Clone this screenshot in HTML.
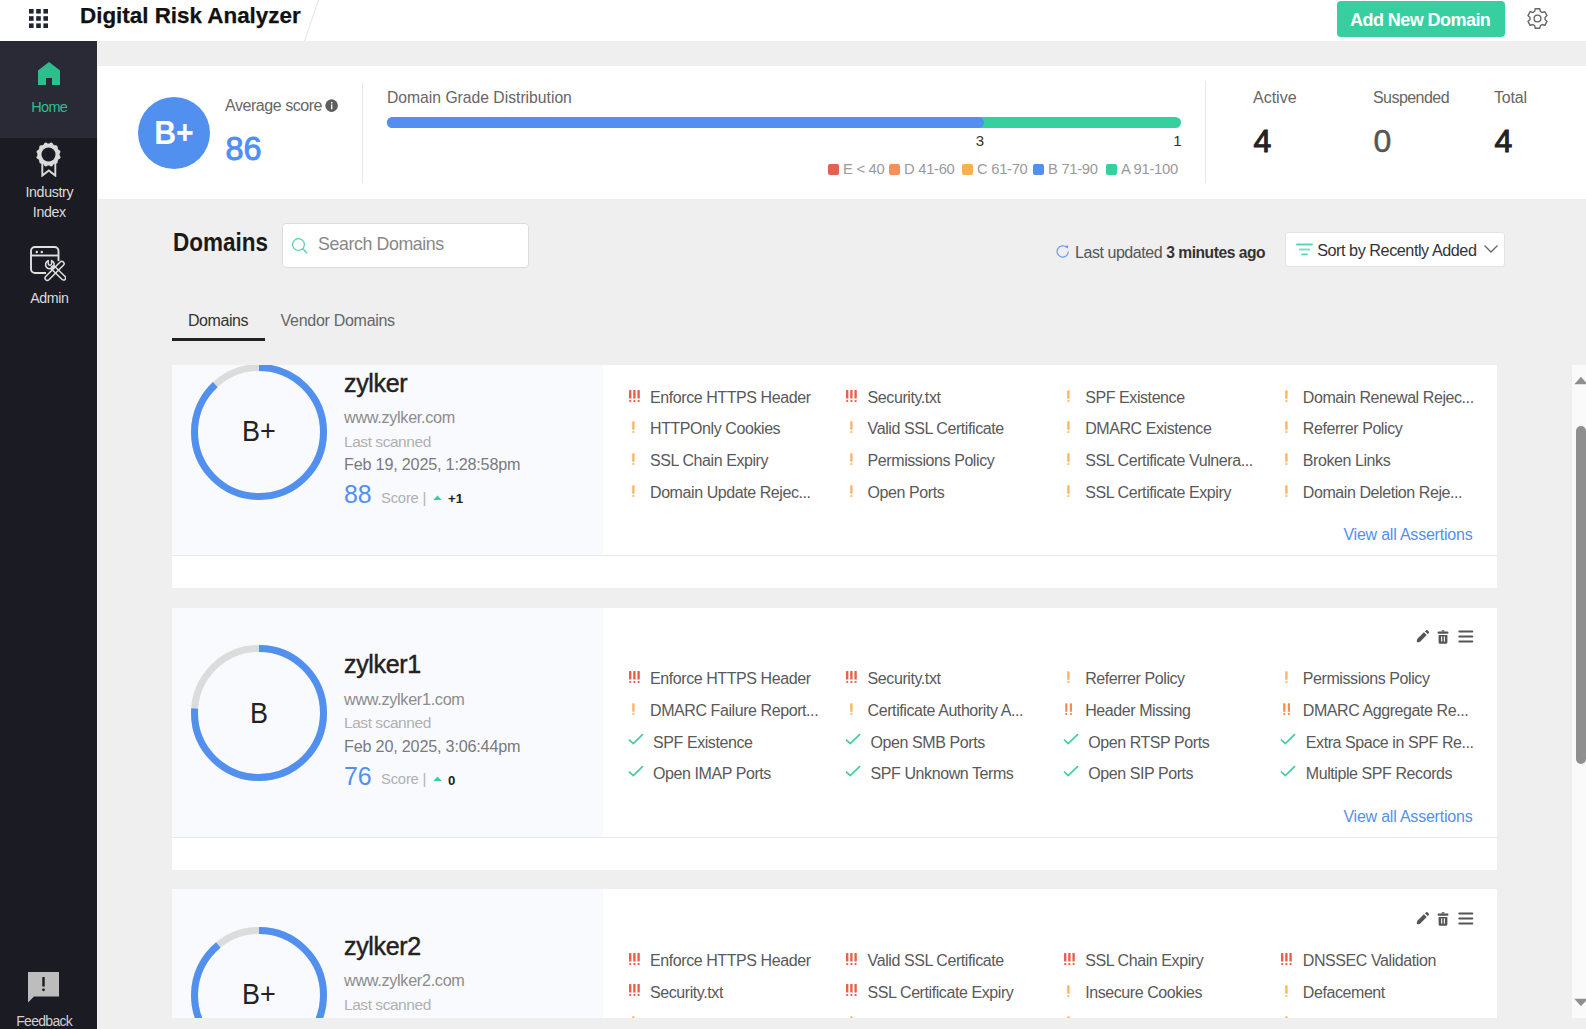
<!DOCTYPE html>
<html><head><meta charset="utf-8"><title>Digital Risk Analyzer</title>
<style>
html,body{margin:0;padding:0;width:1586px;height:1029px;overflow:hidden;background:#efefef}
body{position:relative;font-family:"Liberation Sans",sans-serif}
.t{position:absolute;line-height:1;white-space:nowrap}
svg{display:block}
</style></head><body>
<div style="position:absolute;left:0px;top:0px;width:1586px;height:41px;background:#fff"></div>
<svg style="position:absolute;left:29px;top:9px" width="19" height="19" viewBox="0 0 19 19"><rect x="0.0" y="0.0" width="4.6" height="4.6" fill="#1f2532"/><rect x="7.2" y="0.0" width="4.6" height="4.6" fill="#1f2532"/><rect x="14.4" y="0.0" width="4.6" height="4.6" fill="#1f2532"/><rect x="0.0" y="7.2" width="4.6" height="4.6" fill="#1f2532"/><rect x="7.2" y="7.2" width="4.6" height="4.6" fill="#1f2532"/><rect x="14.4" y="7.2" width="4.6" height="4.6" fill="#1f2532"/><rect x="0.0" y="14.4" width="4.6" height="4.6" fill="#1f2532"/><rect x="7.2" y="14.4" width="4.6" height="4.6" fill="#1f2532"/><rect x="14.4" y="14.4" width="4.6" height="4.6" fill="#1f2532"/></svg>
<div class="t" style="left:80px;top:4.84px;font-size:22.4px;color:#111;font-weight:700;-webkit-text-stroke:0.25px #111">Digital Risk Analyzer</div>
<svg style="position:absolute;left:300px;top:0px" width="24" height="41" viewBox="0 0 24 41"><line x1="18.6" y1="0" x2="4.5" y2="41" stroke="#e4e4e4" stroke-width="1"/></svg>
<div style="position:absolute;left:1337px;top:1px;width:168px;height:36px;background:#37cfa0;border-radius:4px"></div>
<div class="t" style="left:1350px;top:10.96px;font-size:18px;color:#fff;font-weight:700;letter-spacing:-0.55px">Add New Domain</div>
<svg style="position:absolute;left:1526.3px;top:7.2px" width="23" height="23" viewBox="0 0 23 23"><polygon points="8.65,4.45 9.25,1.76 13.75,1.76 14.35,4.45 16.18,5.51 18.81,4.68 21.06,8.58 19.03,10.44 19.03,12.56 21.06,14.42 18.81,18.32 16.18,17.49 14.35,18.55 13.75,21.24 9.25,21.24 8.65,18.55 6.82,17.49 4.19,18.32 1.94,14.42 3.97,12.56 3.97,10.44 1.94,8.58 4.19,4.68 6.82,5.51" fill="none" stroke="#646464" stroke-width="1.35" stroke-linejoin="round"/><circle cx="11.5" cy="11.5" r="3.4" fill="none" stroke="#646464" stroke-width="1.35"/></svg>
<div style="position:absolute;left:0px;top:41px;width:97px;height:988px;background:#1b1b23"></div>
<div style="position:absolute;left:97px;top:41px;width:1px;height:988px;background:#f4f4f4"></div>
<div style="position:absolute;left:0px;top:41px;width:97px;height:97px;background:#2a2a36"></div>
<svg style="position:absolute;left:37px;top:61px" width="24" height="25" viewBox="0 0 24 25"><path d="M1 9.5 L12 1 L23 9.5 V24 H15 V17 H9 V24 H1 Z" fill="#2dbe8d"/></svg>
<div class="t" style="left:49.3px;transform:translateX(-50%) scaleX(1);top:99.63px;font-size:14.5px;color:#2dbe8d;font-weight:400;letter-spacing:-0.7px">Home</div>
<svg style="position:absolute;left:36px;top:142px" width="25" height="35" viewBox="0 0 25 35"><path d="M6.3 19 V33.6 L12.8 28.4 L19.3 33.6 V19" fill="none" stroke="#dadada" stroke-width="1.9" stroke-linejoin="miter"/><circle cx="12.5" cy="12.5" r="11.1" fill="#dadada"/><circle cx="22.55" cy="15.17" r="1.9" fill="#dadada"/><circle cx="19.87" cy="19.84" r="1.9" fill="#dadada"/><circle cx="15.21" cy="22.54" r="1.9" fill="#dadada"/><circle cx="9.83" cy="22.55" r="1.9" fill="#dadada"/><circle cx="5.16" cy="19.87" r="1.9" fill="#dadada"/><circle cx="2.46" cy="15.21" r="1.9" fill="#dadada"/><circle cx="2.45" cy="9.83" r="1.9" fill="#dadada"/><circle cx="5.13" cy="5.16" r="1.9" fill="#dadada"/><circle cx="9.79" cy="2.46" r="1.9" fill="#dadada"/><circle cx="15.17" cy="2.45" r="1.9" fill="#dadada"/><circle cx="19.84" cy="5.13" r="1.9" fill="#dadada"/><circle cx="22.54" cy="9.79" r="1.9" fill="#dadada"/><circle cx="12.5" cy="12.5" r="7.0" fill="#1b1b23"/></svg>
<div class="t" style="left:49.3px;transform:translateX(-50%) scaleX(1);top:185.48px;font-size:14.2px;color:#dcdcdc;font-weight:400;letter-spacing:-0.35px">Industry</div>
<div class="t" style="left:49.3px;transform:translateX(-50%) scaleX(1);top:205.48px;font-size:14.2px;color:#dcdcdc;font-weight:400;letter-spacing:-0.35px">Index</div>
<svg style="position:absolute;left:30px;top:246px" width="36" height="36" viewBox="0 0 36 36"><path d="M16 27 H5 a4 4 0 0 1 -4 -4 V5 a4 4 0 0 1 4 -4 H24.5 a4 4 0 0 1 4 4 V15" fill="none" stroke="#e0e0e0" stroke-width="1.9"/><line x1="1" y1="9.5" x2="28.5" y2="9.5" stroke="#e0e0e0" stroke-width="1.9"/><circle cx="6.8" cy="6" r="1.2" fill="#e0e0e0"/><circle cx="11.8" cy="6" r="1.2" fill="#e0e0e0"/><g fill="none" stroke="#e0e0e0" stroke-width="1.5" stroke-linejoin="round"><path d="M18.93 33.82 L33.43 19.22 A2.3 2.3 0 0 0 30.17 15.98 L15.67 30.58 A2.3 2.3 0 0 0 18.93 33.82 Z"/><path d="M21.84 23.51 L32.14 33.51 A2.1 2.1 0 0 0 35.06 30.49 L24.76 20.49 A2.1 2.1 0 0 0 21.84 23.51 Z"/><path d="M18.2 14.6 A4.3 4.3 0 1 0 21.6 14.6 V17.6 A1.6 1.6 0 0 1 18.2 17.6 Z"/></g></svg>
<div class="t" style="left:49.3px;transform:translateX(-50%) scaleX(1);top:291.38px;font-size:14.2px;color:#dcdcdc;font-weight:400;letter-spacing:-0.4px">Admin</div>
<svg style="position:absolute;left:28px;top:972px" width="31" height="31" viewBox="0 0 31 31"><path d="M0 0 H31 V24.5 H6 L0 30.5 Z" fill="#bdbdbd"/><rect x="14.3" y="5" width="2.4" height="9.5" fill="#1b1b23"/><circle cx="15.5" cy="17.8" r="1.4" fill="#1b1b23"/></svg>
<div class="t" style="left:44.2px;transform:translateX(-50%) scaleX(1);top:1014.25px;font-size:14px;color:#d0d0d0;font-weight:400;letter-spacing:-0.7px">Feedback</div>
<div style="position:absolute;left:98px;top:41px;width:1488px;height:988px;background:#efefef"></div>
<div style="position:absolute;left:98px;top:66px;width:1488px;height:133px;background:#fff"></div>
<div style="position:absolute;left:137.5px;top:96.5px;width:72px;height:72px;background:#5290f0;border-radius:50%"></div>
<div class="t" style="left:174px;transform:translateX(-50%) scaleX(0.93);top:117.09px;font-size:32.5px;color:#fff;font-weight:700;">B+</div>
<div class="t" style="left:225px;top:97.76px;font-size:16px;color:#666;font-weight:400;letter-spacing:-0.45px">Average score</div>
<svg style="position:absolute;left:325.2px;top:98.8px" width="13.5" height="13.5" viewBox="0 0 13.5 13.5"><circle cx="6.6" cy="6.6" r="6.3" fill="#5e5e5e"/><rect x="6.0" y="5.4" width="1.4" height="4.8" fill="#fff"/><rect x="6.0" y="3.0" width="1.4" height="1.5" fill="#fff"/></svg>
<div class="t" style="left:225.5px;top:132.77px;font-size:32.4px;color:#4f8ef7;font-weight:400;-webkit-text-stroke:0.9px #4f8ef7">86</div>
<div style="position:absolute;left:362px;top:81.5px;width:1px;height:101.5px;background:#e6e6e6"></div>
<div class="t" style="left:387px;top:89.51px;font-size:15.7px;color:#666;font-weight:400;">Domain Grade Distribution</div>
<div style="position:absolute;left:387px;top:116.5px;width:794px;height:11px;background:#36cf9e;border-radius:6px"></div>
<div style="position:absolute;left:387px;top:116.5px;width:597px;height:11px;background:#528ff0;border-radius:6px"></div>
<div class="t" style="left:980px;transform:translateX(-50%) scaleX(1);top:133.10px;font-size:15px;color:#333;font-weight:400;">3</div>
<div class="t" style="left:1177.5px;transform:translateX(-50%) scaleX(1);top:133.10px;font-size:15px;color:#333;font-weight:400;">1</div>
<div style="position:absolute;left:828px;top:163.5px;width:11px;height:11px;background:#e5604f;border-radius:2px"></div>
<div class="t" style="left:843px;top:161.97px;font-size:14.8px;color:#9a9a9a;font-weight:400;letter-spacing:-0.3px">E &lt; 40</div>
<div style="position:absolute;left:889px;top:163.5px;width:11px;height:11px;background:#f59158;border-radius:2px"></div>
<div class="t" style="left:904px;top:161.97px;font-size:14.8px;color:#9a9a9a;font-weight:400;letter-spacing:-0.3px">D 41-60</div>
<div style="position:absolute;left:962px;top:163.5px;width:11px;height:11px;background:#fbb04f;border-radius:2px"></div>
<div class="t" style="left:977px;top:161.97px;font-size:14.8px;color:#9a9a9a;font-weight:400;letter-spacing:-0.3px">C 61-70</div>
<div style="position:absolute;left:1033px;top:163.5px;width:11px;height:11px;background:#528ff0;border-radius:2px"></div>
<div class="t" style="left:1048px;top:161.97px;font-size:14.8px;color:#9a9a9a;font-weight:400;letter-spacing:-0.3px">B 71-90</div>
<div style="position:absolute;left:1106px;top:163.5px;width:11px;height:11px;background:#36cf9e;border-radius:2px"></div>
<div class="t" style="left:1121px;top:161.97px;font-size:14.8px;color:#9a9a9a;font-weight:400;letter-spacing:-0.3px">A 91-100</div>
<div style="position:absolute;left:1205px;top:81px;width:1px;height:102px;background:#e6e6e6"></div>
<div class="t" style="left:1253px;top:89.56px;font-size:16px;color:#666;font-weight:400;letter-spacing:0px">Active</div>
<div class="t" style="left:1253.5px;top:124.61px;font-size:32px;color:#222;font-weight:400;-webkit-text-stroke:1px #222">4</div>
<div class="t" style="left:1373px;top:89.56px;font-size:16px;color:#666;font-weight:400;letter-spacing:-0.55px">Suspended</div>
<div class="t" style="left:1373.5px;top:124.61px;font-size:32px;color:#555;font-weight:400;-webkit-text-stroke:0.5px #555">0</div>
<div class="t" style="left:1494px;top:89.56px;font-size:16px;color:#666;font-weight:400;letter-spacing:-0.16px">Total</div>
<div class="t" style="left:1494.5px;top:124.61px;font-size:32px;color:#222;font-weight:400;-webkit-text-stroke:1px #222">4</div>
<div class="t" style="left:172.5px;top:229.29px;font-size:26px;color:#1a1a1a;font-weight:700;transform:scaleX(0.865);transform-origin:0 0">Domains</div>
<div style="position:absolute;left:282px;top:223px;width:245px;height:43px;background:#fff;border:1px solid #dcdcdc;border-radius:4px"></div>
<svg style="position:absolute;left:291px;top:237px" width="18" height="17" viewBox="0 0 18 17"><circle cx="7.5" cy="7.5" r="5.9" fill="none" stroke="#4fd3a8" stroke-width="1.25"/><line x1="11.8" y1="11.8" x2="15.8" y2="15.8" stroke="#4fd3a8" stroke-width="1.4" stroke-linecap="round"/></svg>
<div class="t" style="left:318px;top:235.93px;font-size:17.8px;color:#888;font-weight:400;letter-spacing:-0.4px">Search Domains</div>
<svg style="position:absolute;left:1055px;top:243px" width="16" height="16" viewBox="0 0 16 16"><path d="M13.3 8.5 A5.6 5.6 0 1 1 11.6 4.4" fill="none" stroke="#6d9df4" stroke-width="1.25"/><path d="M10.2 2.9 L13.2 2.6 L12.7 5.7 Z" fill="#5a90f2"/></svg>
<div class="t" style="left:1075px;top:245.26px;font-size:16px;color:#555;font-weight:400;letter-spacing:-0.45px">Last updated <b style="color:#333;font-size:15.6px">3 minutes ago</b></div>
<div style="position:absolute;left:1285px;top:232px;width:218px;height:33px;background:#fff;border:1px solid #e3e3e3;border-radius:3px"></div>
<svg style="position:absolute;left:1296px;top:243px" width="17" height="14" viewBox="0 0 17 14"><line x1="1" y1="1.5" x2="16" y2="1.5" stroke="#4fd9ad" stroke-width="1.8" stroke-linecap="round"/><line x1="3.5" y1="6.5" x2="13.5" y2="6.5" stroke="#7fe0c2" stroke-width="1.8" stroke-linecap="round"/><line x1="6" y1="11.3" x2="11" y2="11.3" stroke="#4fd9ad" stroke-width="1.8" stroke-linecap="round"/></svg>
<div class="t" style="left:1317.2px;top:242.49px;font-size:16.2px;color:#333;font-weight:400;letter-spacing:-0.45px">Sort by Recently Added</div>
<svg style="position:absolute;left:1483px;top:244px" width="16" height="10" viewBox="0 0 16 10"><polyline points="1.5,1.5 8,8 14.5,1.5" fill="none" stroke="#666" stroke-width="1.3"/></svg>
<div class="t" style="left:188px;top:312.66px;font-size:16px;color:#333;font-weight:400;letter-spacing:-0.43px">Domains</div>
<div class="t" style="left:280.6px;top:312.66px;font-size:16px;color:#666;font-weight:400;letter-spacing:-0.29px">Vendor Domains</div>
<div style="position:absolute;left:172px;top:338.4px;width:92.5px;height:2.5px;background:#222"></div>
<div style="position:absolute;left:172px;top:365px;width:1415px;height:652.5px;overflow:hidden"><div style="position:absolute;left:-172px;top:-365px;width:1586px;height:1029px">
<div style="position:absolute;left:172px;top:326px;width:1325px;height:262px;background:#fff"></div>
<div style="position:absolute;left:172px;top:326px;width:430.5px;height:229px;background:#f9fafe"></div>
<div style="position:absolute;left:172px;top:555px;width:1325px;height:1.3px;background:#e8e8e8"></div>
<svg style="position:absolute;left:190.5px;top:363.5px" width="136" height="136" viewBox="0 0 136 136"><circle cx="68" cy="68" r="64.5" fill="none" stroke="#dcdcdc" stroke-width="7"/><circle cx="68" cy="68" r="64.5" fill="none" stroke="#5290f0" stroke-width="7" stroke-dasharray="356.63 405.27" transform="rotate(-90 68 68)"/></svg>
<div class="t" style="left:259px;transform:translateX(-50%) scaleX(0.9);top:416.11px;font-size:30px;color:#222;font-weight:400;">B+</div>
<div class="t" style="left:344px;top:370.84px;font-size:25px;color:#222;font-weight:400;-webkit-text-stroke:0.45px #222;letter-spacing:-0.35px">zylker</div>
<div class="t" style="left:344px;top:409.09px;font-size:16.2px;color:#8c8c8c;font-weight:400;letter-spacing:-0.3px">www.zylker.com</div>
<div class="t" style="left:344px;top:433.68px;font-size:15.5px;color:#b0b0b0;font-weight:400;letter-spacing:-0.45px">Last scanned</div>
<div class="t" style="left:344px;top:456.09px;font-size:16.2px;color:#7a7a7a;font-weight:400;letter-spacing:-0.2px">Feb 19, 2025, 1:28:58pm</div>
<div class="t" style="left:344px;top:482.12px;font-size:24.9px;color:#5290f0;font-weight:400;">88</div>
<div class="t" style="left:381px;top:490.67px;font-size:14.8px;color:#b0b0b0;font-weight:400;letter-spacing:-0.2px">Score |</div>
<svg style="position:absolute;left:432.7px;top:494.8px" width="10" height="6" viewBox="0 0 10 6"><path d="M0.3 5 L4.5 0.4 L8.7 5 Z" fill="#36cf9e"/></svg>
<div class="t" style="left:448px;top:492.03px;font-size:13.2px;color:#222;font-weight:700;">+1</div>
<svg style="position:absolute;left:628.5px;top:389.5px" width="11" height="12" viewBox="0 0 11 12"><rect x="0.0" y="0" width="2.4" height="8.6" rx="0.6" fill="#e8604c"/><rect x="0.1" y="10" width="2.2" height="2" rx="0.8" fill="#e8604c"/><rect x="4.2" y="0" width="2.4" height="8.6" rx="0.6" fill="#e8604c"/><rect x="4.3" y="10" width="2.2" height="2" rx="0.8" fill="#e8604c"/><rect x="8.4" y="0" width="2.4" height="8.6" rx="0.6" fill="#e8604c"/><rect x="8.5" y="10" width="2.2" height="2" rx="0.8" fill="#e8604c"/></svg>
<div class="t" style="left:650.0px;top:389.76px;font-size:16px;color:#595959;font-weight:400;letter-spacing:-0.42px">Enforce HTTPS Header</div>
<svg style="position:absolute;left:632.0px;top:421.3px" width="3" height="12" viewBox="0 0 3 12"><rect x="0.2" y="0.3" width="2.4" height="8.5" rx="0.6" fill="#fdb65e"/><rect x="0.3" y="10.1" width="2.2" height="1.9" rx="0.9" fill="#fdb65e"/></svg>
<div class="t" style="left:650.0px;top:421.36px;font-size:16px;color:#595959;font-weight:400;letter-spacing:-0.42px">HTTPOnly Cookies</div>
<svg style="position:absolute;left:632.0px;top:452.9px" width="3" height="12" viewBox="0 0 3 12"><rect x="0.2" y="0.3" width="2.4" height="8.5" rx="0.6" fill="#fdb65e"/><rect x="0.3" y="10.1" width="2.2" height="1.9" rx="0.9" fill="#fdb65e"/></svg>
<div class="t" style="left:650.0px;top:452.96px;font-size:16px;color:#595959;font-weight:400;letter-spacing:-0.42px">SSL Chain Expiry</div>
<svg style="position:absolute;left:632.0px;top:484.5px" width="3" height="12" viewBox="0 0 3 12"><rect x="0.2" y="0.3" width="2.4" height="8.5" rx="0.6" fill="#fdb65e"/><rect x="0.3" y="10.1" width="2.2" height="1.9" rx="0.9" fill="#fdb65e"/></svg>
<div class="t" style="left:650.0px;top:484.56px;font-size:16px;color:#595959;font-weight:400;letter-spacing:-0.42px">Domain Update Rejec...</div>
<svg style="position:absolute;left:846.1px;top:389.5px" width="11" height="12" viewBox="0 0 11 12"><rect x="0.0" y="0" width="2.4" height="8.6" rx="0.6" fill="#e8604c"/><rect x="0.1" y="10" width="2.2" height="2" rx="0.8" fill="#e8604c"/><rect x="4.2" y="0" width="2.4" height="8.6" rx="0.6" fill="#e8604c"/><rect x="4.3" y="10" width="2.2" height="2" rx="0.8" fill="#e8604c"/><rect x="8.4" y="0" width="2.4" height="8.6" rx="0.6" fill="#e8604c"/><rect x="8.5" y="10" width="2.2" height="2" rx="0.8" fill="#e8604c"/></svg>
<div class="t" style="left:867.6px;top:389.76px;font-size:16px;color:#595959;font-weight:400;letter-spacing:-0.42px">Security.txt</div>
<svg style="position:absolute;left:849.6px;top:421.3px" width="3" height="12" viewBox="0 0 3 12"><rect x="0.2" y="0.3" width="2.4" height="8.5" rx="0.6" fill="#fdb65e"/><rect x="0.3" y="10.1" width="2.2" height="1.9" rx="0.9" fill="#fdb65e"/></svg>
<div class="t" style="left:867.6px;top:421.36px;font-size:16px;color:#595959;font-weight:400;letter-spacing:-0.42px">Valid SSL Certificate</div>
<svg style="position:absolute;left:849.6px;top:452.9px" width="3" height="12" viewBox="0 0 3 12"><rect x="0.2" y="0.3" width="2.4" height="8.5" rx="0.6" fill="#fdb65e"/><rect x="0.3" y="10.1" width="2.2" height="1.9" rx="0.9" fill="#fdb65e"/></svg>
<div class="t" style="left:867.6px;top:452.96px;font-size:16px;color:#595959;font-weight:400;letter-spacing:-0.42px">Permissions Policy</div>
<svg style="position:absolute;left:849.6px;top:484.5px" width="3" height="12" viewBox="0 0 3 12"><rect x="0.2" y="0.3" width="2.4" height="8.5" rx="0.6" fill="#fdb65e"/><rect x="0.3" y="10.1" width="2.2" height="1.9" rx="0.9" fill="#fdb65e"/></svg>
<div class="t" style="left:867.6px;top:484.56px;font-size:16px;color:#595959;font-weight:400;letter-spacing:-0.42px">Open Ports</div>
<svg style="position:absolute;left:1067.2px;top:389.7px" width="3" height="12" viewBox="0 0 3 12"><rect x="0.2" y="0.3" width="2.4" height="8.5" rx="0.6" fill="#fdb65e"/><rect x="0.3" y="10.1" width="2.2" height="1.9" rx="0.9" fill="#fdb65e"/></svg>
<div class="t" style="left:1085.2px;top:389.76px;font-size:16px;color:#595959;font-weight:400;letter-spacing:-0.42px">SPF Existence</div>
<svg style="position:absolute;left:1067.2px;top:421.3px" width="3" height="12" viewBox="0 0 3 12"><rect x="0.2" y="0.3" width="2.4" height="8.5" rx="0.6" fill="#fdb65e"/><rect x="0.3" y="10.1" width="2.2" height="1.9" rx="0.9" fill="#fdb65e"/></svg>
<div class="t" style="left:1085.2px;top:421.36px;font-size:16px;color:#595959;font-weight:400;letter-spacing:-0.42px">DMARC Existence</div>
<svg style="position:absolute;left:1067.2px;top:452.9px" width="3" height="12" viewBox="0 0 3 12"><rect x="0.2" y="0.3" width="2.4" height="8.5" rx="0.6" fill="#fdb65e"/><rect x="0.3" y="10.1" width="2.2" height="1.9" rx="0.9" fill="#fdb65e"/></svg>
<div class="t" style="left:1085.2px;top:452.96px;font-size:16px;color:#595959;font-weight:400;letter-spacing:-0.42px">SSL Certificate Vulnera...</div>
<svg style="position:absolute;left:1067.2px;top:484.5px" width="3" height="12" viewBox="0 0 3 12"><rect x="0.2" y="0.3" width="2.4" height="8.5" rx="0.6" fill="#fdb65e"/><rect x="0.3" y="10.1" width="2.2" height="1.9" rx="0.9" fill="#fdb65e"/></svg>
<div class="t" style="left:1085.2px;top:484.56px;font-size:16px;color:#595959;font-weight:400;letter-spacing:-0.42px">SSL Certificate Expiry</div>
<svg style="position:absolute;left:1284.8px;top:389.7px" width="3" height="12" viewBox="0 0 3 12"><rect x="0.2" y="0.3" width="2.4" height="8.5" rx="0.6" fill="#fdb65e"/><rect x="0.3" y="10.1" width="2.2" height="1.9" rx="0.9" fill="#fdb65e"/></svg>
<div class="t" style="left:1302.8px;top:389.76px;font-size:16px;color:#595959;font-weight:400;letter-spacing:-0.42px">Domain Renewal Rejec...</div>
<svg style="position:absolute;left:1284.8px;top:421.3px" width="3" height="12" viewBox="0 0 3 12"><rect x="0.2" y="0.3" width="2.4" height="8.5" rx="0.6" fill="#fdb65e"/><rect x="0.3" y="10.1" width="2.2" height="1.9" rx="0.9" fill="#fdb65e"/></svg>
<div class="t" style="left:1302.8px;top:421.36px;font-size:16px;color:#595959;font-weight:400;letter-spacing:-0.42px">Referrer Policy</div>
<svg style="position:absolute;left:1284.8px;top:452.9px" width="3" height="12" viewBox="0 0 3 12"><rect x="0.2" y="0.3" width="2.4" height="8.5" rx="0.6" fill="#fdb65e"/><rect x="0.3" y="10.1" width="2.2" height="1.9" rx="0.9" fill="#fdb65e"/></svg>
<div class="t" style="left:1302.8px;top:452.96px;font-size:16px;color:#595959;font-weight:400;letter-spacing:-0.42px">Broken Links</div>
<svg style="position:absolute;left:1284.8px;top:484.5px" width="3" height="12" viewBox="0 0 3 12"><rect x="0.2" y="0.3" width="2.4" height="8.5" rx="0.6" fill="#fdb65e"/><rect x="0.3" y="10.1" width="2.2" height="1.9" rx="0.9" fill="#fdb65e"/></svg>
<div class="t" style="left:1302.8px;top:484.56px;font-size:16px;color:#595959;font-weight:400;letter-spacing:-0.42px">Domain Deletion Reje...</div>
<div class="t" style="right:113.5px;top:527.16px;font-size:16px;color:#5290f0;font-weight:400;letter-spacing:-0.21px">View all Assertions</div>
<svg style="position:absolute;left:1416px;top:348.5px" width="14" height="13" viewBox="0 0 14 13"><path d="M1.6 8.6 L7.9 2.3 L10.7 5.1 L4.4 11.4 Q2.2 12.6 0.9 12.1 Q0.4 10.8 1.6 8.6 Z" fill="#555"/><path d="M8.9 1.3 L9.9 0.4 a1.3 1.3 0 0 1 1.8 0 l1 1 a1.3 1.3 0 0 1 0 1.8 L11.7 4.1 Z" fill="#555"/></svg>
<svg style="position:absolute;left:1436.5px;top:347.5px" width="12" height="15" viewBox="0 0 12 15"><path d="M4.3 2.6 a1.7 1.7 0 0 1 3.4 0 Z" fill="#555"/><rect x="0.6" y="2.5" width="10.8" height="2.2" rx="0.8" fill="#555"/><path d="M1.6 5.9 H10.4 V13.2 a1.6 1.6 0 0 1 -1.6 1.6 H3.2 a1.6 1.6 0 0 1 -1.6 -1.6 Z" fill="#555"/><rect x="4.1" y="7.4" width="1.1" height="5.2" fill="#fff"/><rect x="6.8" y="7.4" width="1.1" height="5.2" fill="#fff"/></svg>
<svg style="position:absolute;left:1457.5px;top:348.5px" width="16" height="13" viewBox="0 0 16 13"><rect x="0.3" y="0.4" width="15" height="2" rx="1" fill="#555"/><rect x="0.3" y="5.5" width="15" height="2" rx="1" fill="#555"/><rect x="0.3" y="10.5" width="15" height="2" rx="1" fill="#555"/></svg>
<div style="position:absolute;left:172px;top:607.6px;width:1325px;height:262px;background:#fff"></div>
<div style="position:absolute;left:172px;top:607.6px;width:430.5px;height:229px;background:#f9fafe"></div>
<div style="position:absolute;left:172px;top:836.6px;width:1325px;height:1.3px;background:#e8e8e8"></div>
<svg style="position:absolute;left:190.5px;top:645.1px" width="136" height="136" viewBox="0 0 136 136"><circle cx="68" cy="68" r="64.5" fill="none" stroke="#dcdcdc" stroke-width="7"/><circle cx="68" cy="68" r="64.5" fill="none" stroke="#5290f0" stroke-width="7" stroke-dasharray="308.00 405.27" transform="rotate(-90 68 68)"/></svg>
<div class="t" style="left:259px;transform:translateX(-50%) scaleX(0.9);top:697.71px;font-size:30px;color:#222;font-weight:400;">B</div>
<div class="t" style="left:344px;top:652.44px;font-size:25px;color:#222;font-weight:400;-webkit-text-stroke:0.45px #222;letter-spacing:-0.35px">zylker1</div>
<div class="t" style="left:344px;top:690.69px;font-size:16.2px;color:#8c8c8c;font-weight:400;letter-spacing:-0.3px">www.zylker1.com</div>
<div class="t" style="left:344px;top:715.28px;font-size:15.5px;color:#b0b0b0;font-weight:400;letter-spacing:-0.45px">Last scanned</div>
<div class="t" style="left:344px;top:737.69px;font-size:16.2px;color:#7a7a7a;font-weight:400;letter-spacing:-0.2px">Feb 20, 2025, 3:06:44pm</div>
<div class="t" style="left:344px;top:763.72px;font-size:24.9px;color:#5290f0;font-weight:400;">76</div>
<div class="t" style="left:381px;top:772.27px;font-size:14.8px;color:#b0b0b0;font-weight:400;letter-spacing:-0.2px">Score |</div>
<svg style="position:absolute;left:432.7px;top:776.4000000000001px" width="10" height="6" viewBox="0 0 10 6"><path d="M0.3 5 L4.5 0.4 L8.7 5 Z" fill="#36cf9e"/></svg>
<div class="t" style="left:448px;top:773.63px;font-size:13.2px;color:#222;font-weight:700;">0</div>
<svg style="position:absolute;left:628.5px;top:671.1px" width="11" height="12" viewBox="0 0 11 12"><rect x="0.0" y="0" width="2.4" height="8.6" rx="0.6" fill="#e8604c"/><rect x="0.1" y="10" width="2.2" height="2" rx="0.8" fill="#e8604c"/><rect x="4.2" y="0" width="2.4" height="8.6" rx="0.6" fill="#e8604c"/><rect x="4.3" y="10" width="2.2" height="2" rx="0.8" fill="#e8604c"/><rect x="8.4" y="0" width="2.4" height="8.6" rx="0.6" fill="#e8604c"/><rect x="8.5" y="10" width="2.2" height="2" rx="0.8" fill="#e8604c"/></svg>
<div class="t" style="left:650.0px;top:671.36px;font-size:16px;color:#595959;font-weight:400;letter-spacing:-0.42px">Enforce HTTPS Header</div>
<svg style="position:absolute;left:632.0px;top:702.9px" width="3" height="12" viewBox="0 0 3 12"><rect x="0.2" y="0.3" width="2.4" height="8.5" rx="0.6" fill="#fdb65e"/><rect x="0.3" y="10.1" width="2.2" height="1.9" rx="0.9" fill="#fdb65e"/></svg>
<div class="t" style="left:650.0px;top:702.96px;font-size:16px;color:#595959;font-weight:400;letter-spacing:-0.42px">DMARC Failure Report...</div>
<svg style="position:absolute;left:627.5px;top:733.1px" width="16" height="12" viewBox="0 0 16 12"><polyline points="1,6.6 5.3,10.6 15,1.2" fill="none" stroke="#42d0a0" stroke-width="1.8"/></svg>
<div class="t" style="left:653.0px;top:734.56px;font-size:16px;color:#595959;font-weight:400;letter-spacing:-0.42px">SPF Existence</div>
<svg style="position:absolute;left:627.5px;top:764.7px" width="16" height="12" viewBox="0 0 16 12"><polyline points="1,6.6 5.3,10.6 15,1.2" fill="none" stroke="#42d0a0" stroke-width="1.8"/></svg>
<div class="t" style="left:653.0px;top:766.16px;font-size:16px;color:#595959;font-weight:400;letter-spacing:-0.42px">Open IMAP Ports</div>
<svg style="position:absolute;left:846.1px;top:671.1px" width="11" height="12" viewBox="0 0 11 12"><rect x="0.0" y="0" width="2.4" height="8.6" rx="0.6" fill="#e8604c"/><rect x="0.1" y="10" width="2.2" height="2" rx="0.8" fill="#e8604c"/><rect x="4.2" y="0" width="2.4" height="8.6" rx="0.6" fill="#e8604c"/><rect x="4.3" y="10" width="2.2" height="2" rx="0.8" fill="#e8604c"/><rect x="8.4" y="0" width="2.4" height="8.6" rx="0.6" fill="#e8604c"/><rect x="8.5" y="10" width="2.2" height="2" rx="0.8" fill="#e8604c"/></svg>
<div class="t" style="left:867.6px;top:671.36px;font-size:16px;color:#595959;font-weight:400;letter-spacing:-0.42px">Security.txt</div>
<svg style="position:absolute;left:849.6px;top:702.9px" width="3" height="12" viewBox="0 0 3 12"><rect x="0.2" y="0.3" width="2.4" height="8.5" rx="0.6" fill="#fdb65e"/><rect x="0.3" y="10.1" width="2.2" height="1.9" rx="0.9" fill="#fdb65e"/></svg>
<div class="t" style="left:867.6px;top:702.96px;font-size:16px;color:#595959;font-weight:400;letter-spacing:-0.42px">Certificate Authority A...</div>
<svg style="position:absolute;left:845.1px;top:733.1px" width="16" height="12" viewBox="0 0 16 12"><polyline points="1,6.6 5.3,10.6 15,1.2" fill="none" stroke="#42d0a0" stroke-width="1.8"/></svg>
<div class="t" style="left:870.6px;top:734.56px;font-size:16px;color:#595959;font-weight:400;letter-spacing:-0.42px">Open SMB Ports</div>
<svg style="position:absolute;left:845.1px;top:764.7px" width="16" height="12" viewBox="0 0 16 12"><polyline points="1,6.6 5.3,10.6 15,1.2" fill="none" stroke="#42d0a0" stroke-width="1.8"/></svg>
<div class="t" style="left:870.6px;top:766.16px;font-size:16px;color:#595959;font-weight:400;letter-spacing:-0.42px">SPF Unknown Terms</div>
<svg style="position:absolute;left:1067.2px;top:671.3px" width="3" height="12" viewBox="0 0 3 12"><rect x="0.2" y="0.3" width="2.4" height="8.5" rx="0.6" fill="#fdb65e"/><rect x="0.3" y="10.1" width="2.2" height="1.9" rx="0.9" fill="#fdb65e"/></svg>
<div class="t" style="left:1085.2px;top:671.36px;font-size:16px;color:#595959;font-weight:400;letter-spacing:-0.42px">Referrer Policy</div>
<svg style="position:absolute;left:1065.4px;top:702.7px" width="8" height="12" viewBox="0 0 8 12"><rect x="0.2" y="0.3" width="2.2" height="8.5" rx="0.6" fill="#f58c4a"/><rect x="0.2" y="10.1" width="2.2" height="1.9" rx="0.8" fill="#f58c4a"/><rect x="4.8" y="0.3" width="2.2" height="8.5" rx="0.6" fill="#f58c4a"/><rect x="4.8" y="10.1" width="2.2" height="1.9" rx="0.8" fill="#f58c4a"/></svg>
<div class="t" style="left:1085.2px;top:702.96px;font-size:16px;color:#595959;font-weight:400;letter-spacing:-0.42px">Header Missing</div>
<svg style="position:absolute;left:1062.7px;top:733.1px" width="16" height="12" viewBox="0 0 16 12"><polyline points="1,6.6 5.3,10.6 15,1.2" fill="none" stroke="#42d0a0" stroke-width="1.8"/></svg>
<div class="t" style="left:1088.2px;top:734.56px;font-size:16px;color:#595959;font-weight:400;letter-spacing:-0.42px">Open RTSP Ports</div>
<svg style="position:absolute;left:1062.7px;top:764.7px" width="16" height="12" viewBox="0 0 16 12"><polyline points="1,6.6 5.3,10.6 15,1.2" fill="none" stroke="#42d0a0" stroke-width="1.8"/></svg>
<div class="t" style="left:1088.2px;top:766.16px;font-size:16px;color:#595959;font-weight:400;letter-spacing:-0.42px">Open SIP Ports</div>
<svg style="position:absolute;left:1284.8px;top:671.3px" width="3" height="12" viewBox="0 0 3 12"><rect x="0.2" y="0.3" width="2.4" height="8.5" rx="0.6" fill="#fdb65e"/><rect x="0.3" y="10.1" width="2.2" height="1.9" rx="0.9" fill="#fdb65e"/></svg>
<div class="t" style="left:1302.8px;top:671.36px;font-size:16px;color:#595959;font-weight:400;letter-spacing:-0.42px">Permissions Policy</div>
<svg style="position:absolute;left:1283.0px;top:702.7px" width="8" height="12" viewBox="0 0 8 12"><rect x="0.2" y="0.3" width="2.2" height="8.5" rx="0.6" fill="#f58c4a"/><rect x="0.2" y="10.1" width="2.2" height="1.9" rx="0.8" fill="#f58c4a"/><rect x="4.8" y="0.3" width="2.2" height="8.5" rx="0.6" fill="#f58c4a"/><rect x="4.8" y="10.1" width="2.2" height="1.9" rx="0.8" fill="#f58c4a"/></svg>
<div class="t" style="left:1302.8px;top:702.96px;font-size:16px;color:#595959;font-weight:400;letter-spacing:-0.42px">DMARC Aggregate Re...</div>
<svg style="position:absolute;left:1280.3px;top:733.1px" width="16" height="12" viewBox="0 0 16 12"><polyline points="1,6.6 5.3,10.6 15,1.2" fill="none" stroke="#42d0a0" stroke-width="1.8"/></svg>
<div class="t" style="left:1305.8px;top:734.56px;font-size:16px;color:#595959;font-weight:400;letter-spacing:-0.42px">Extra Space in SPF Re...</div>
<svg style="position:absolute;left:1280.3px;top:764.7px" width="16" height="12" viewBox="0 0 16 12"><polyline points="1,6.6 5.3,10.6 15,1.2" fill="none" stroke="#42d0a0" stroke-width="1.8"/></svg>
<div class="t" style="left:1305.8px;top:766.16px;font-size:16px;color:#595959;font-weight:400;letter-spacing:-0.42px">Multiple SPF Records</div>
<div class="t" style="right:113.5px;top:808.76px;font-size:16px;color:#5290f0;font-weight:400;letter-spacing:-0.21px">View all Assertions</div>
<svg style="position:absolute;left:1416px;top:630.1px" width="14" height="13" viewBox="0 0 14 13"><path d="M1.6 8.6 L7.9 2.3 L10.7 5.1 L4.4 11.4 Q2.2 12.6 0.9 12.1 Q0.4 10.8 1.6 8.6 Z" fill="#555"/><path d="M8.9 1.3 L9.9 0.4 a1.3 1.3 0 0 1 1.8 0 l1 1 a1.3 1.3 0 0 1 0 1.8 L11.7 4.1 Z" fill="#555"/></svg>
<svg style="position:absolute;left:1436.5px;top:629.1px" width="12" height="15" viewBox="0 0 12 15"><path d="M4.3 2.6 a1.7 1.7 0 0 1 3.4 0 Z" fill="#555"/><rect x="0.6" y="2.5" width="10.8" height="2.2" rx="0.8" fill="#555"/><path d="M1.6 5.9 H10.4 V13.2 a1.6 1.6 0 0 1 -1.6 1.6 H3.2 a1.6 1.6 0 0 1 -1.6 -1.6 Z" fill="#555"/><rect x="4.1" y="7.4" width="1.1" height="5.2" fill="#fff"/><rect x="6.8" y="7.4" width="1.1" height="5.2" fill="#fff"/></svg>
<svg style="position:absolute;left:1457.5px;top:630.1px" width="16" height="13" viewBox="0 0 16 13"><rect x="0.3" y="0.4" width="15" height="2" rx="1" fill="#555"/><rect x="0.3" y="5.5" width="15" height="2" rx="1" fill="#555"/><rect x="0.3" y="10.5" width="15" height="2" rx="1" fill="#555"/></svg>
<div style="position:absolute;left:172px;top:889.2px;width:1325px;height:262px;background:#fff"></div>
<div style="position:absolute;left:172px;top:889.2px;width:430.5px;height:229px;background:#f9fafe"></div>
<div style="position:absolute;left:172px;top:1118.2px;width:1325px;height:1.3px;background:#e8e8e8"></div>
<svg style="position:absolute;left:190.5px;top:926.7px" width="136" height="136" viewBox="0 0 136 136"><circle cx="68" cy="68" r="64.5" fill="none" stroke="#dcdcdc" stroke-width="7"/><circle cx="68" cy="68" r="64.5" fill="none" stroke="#5290f0" stroke-width="7" stroke-dasharray="360.69 405.27" transform="rotate(-90 68 68)"/></svg>
<div class="t" style="left:259px;transform:translateX(-50%) scaleX(0.9);top:979.31px;font-size:30px;color:#222;font-weight:400;">B+</div>
<div class="t" style="left:344px;top:934.04px;font-size:25px;color:#222;font-weight:400;-webkit-text-stroke:0.45px #222;letter-spacing:-0.35px">zylker2</div>
<div class="t" style="left:344px;top:972.29px;font-size:16.2px;color:#8c8c8c;font-weight:400;letter-spacing:-0.3px">www.zylker2.com</div>
<div class="t" style="left:344px;top:996.88px;font-size:15.5px;color:#b0b0b0;font-weight:400;letter-spacing:-0.45px">Last scanned</div>
<div class="t" style="left:344px;top:1019.29px;font-size:16.2px;color:#7a7a7a;font-weight:400;letter-spacing:-0.2px">Feb 20, 2025, 3:10:12pm</div>
<div class="t" style="left:344px;top:1045.32px;font-size:24.9px;color:#5290f0;font-weight:400;">89</div>
<div class="t" style="left:381px;top:1053.87px;font-size:14.8px;color:#b0b0b0;font-weight:400;letter-spacing:-0.2px">Score |</div>
<svg style="position:absolute;left:432.7px;top:1058.0px" width="10" height="6" viewBox="0 0 10 6"><path d="M0.3 5 L4.5 0.4 L8.7 5 Z" fill="#36cf9e"/></svg>
<div class="t" style="left:448px;top:1055.23px;font-size:13.2px;color:#222;font-weight:700;">+2</div>
<svg style="position:absolute;left:628.5px;top:952.7px" width="11" height="12" viewBox="0 0 11 12"><rect x="0.0" y="0" width="2.4" height="8.6" rx="0.6" fill="#e8604c"/><rect x="0.1" y="10" width="2.2" height="2" rx="0.8" fill="#e8604c"/><rect x="4.2" y="0" width="2.4" height="8.6" rx="0.6" fill="#e8604c"/><rect x="4.3" y="10" width="2.2" height="2" rx="0.8" fill="#e8604c"/><rect x="8.4" y="0" width="2.4" height="8.6" rx="0.6" fill="#e8604c"/><rect x="8.5" y="10" width="2.2" height="2" rx="0.8" fill="#e8604c"/></svg>
<div class="t" style="left:650.0px;top:952.96px;font-size:16px;color:#595959;font-weight:400;letter-spacing:-0.42px">Enforce HTTPS Header</div>
<svg style="position:absolute;left:628.5px;top:984.3000000000001px" width="11" height="12" viewBox="0 0 11 12"><rect x="0.0" y="0" width="2.4" height="8.6" rx="0.6" fill="#e8604c"/><rect x="0.1" y="10" width="2.2" height="2" rx="0.8" fill="#e8604c"/><rect x="4.2" y="0" width="2.4" height="8.6" rx="0.6" fill="#e8604c"/><rect x="4.3" y="10" width="2.2" height="2" rx="0.8" fill="#e8604c"/><rect x="8.4" y="0" width="2.4" height="8.6" rx="0.6" fill="#e8604c"/><rect x="8.5" y="10" width="2.2" height="2" rx="0.8" fill="#e8604c"/></svg>
<div class="t" style="left:650.0px;top:984.56px;font-size:16px;color:#595959;font-weight:400;letter-spacing:-0.42px">Security.txt</div>
<svg style="position:absolute;left:632.0px;top:1016.1px" width="3" height="12" viewBox="0 0 3 12"><rect x="0.2" y="0.3" width="2.4" height="8.5" rx="0.6" fill="#fdb65e"/><rect x="0.3" y="10.1" width="2.2" height="1.9" rx="0.9" fill="#fdb65e"/></svg>
<div class="t" style="left:650.0px;top:1016.16px;font-size:16px;color:#595959;font-weight:400;letter-spacing:-0.42px"></div>
<svg style="position:absolute;left:632.0px;top:1047.7px" width="3" height="12" viewBox="0 0 3 12"><rect x="0.2" y="0.3" width="2.4" height="8.5" rx="0.6" fill="#fdb65e"/><rect x="0.3" y="10.1" width="2.2" height="1.9" rx="0.9" fill="#fdb65e"/></svg>
<div class="t" style="left:650.0px;top:1047.76px;font-size:16px;color:#595959;font-weight:400;letter-spacing:-0.42px"></div>
<svg style="position:absolute;left:846.1px;top:952.7px" width="11" height="12" viewBox="0 0 11 12"><rect x="0.0" y="0" width="2.4" height="8.6" rx="0.6" fill="#e8604c"/><rect x="0.1" y="10" width="2.2" height="2" rx="0.8" fill="#e8604c"/><rect x="4.2" y="0" width="2.4" height="8.6" rx="0.6" fill="#e8604c"/><rect x="4.3" y="10" width="2.2" height="2" rx="0.8" fill="#e8604c"/><rect x="8.4" y="0" width="2.4" height="8.6" rx="0.6" fill="#e8604c"/><rect x="8.5" y="10" width="2.2" height="2" rx="0.8" fill="#e8604c"/></svg>
<div class="t" style="left:867.6px;top:952.96px;font-size:16px;color:#595959;font-weight:400;letter-spacing:-0.42px">Valid SSL Certificate</div>
<svg style="position:absolute;left:846.1px;top:984.3000000000001px" width="11" height="12" viewBox="0 0 11 12"><rect x="0.0" y="0" width="2.4" height="8.6" rx="0.6" fill="#e8604c"/><rect x="0.1" y="10" width="2.2" height="2" rx="0.8" fill="#e8604c"/><rect x="4.2" y="0" width="2.4" height="8.6" rx="0.6" fill="#e8604c"/><rect x="4.3" y="10" width="2.2" height="2" rx="0.8" fill="#e8604c"/><rect x="8.4" y="0" width="2.4" height="8.6" rx="0.6" fill="#e8604c"/><rect x="8.5" y="10" width="2.2" height="2" rx="0.8" fill="#e8604c"/></svg>
<div class="t" style="left:867.6px;top:984.56px;font-size:16px;color:#595959;font-weight:400;letter-spacing:-0.42px">SSL Certificate Expiry</div>
<svg style="position:absolute;left:849.6px;top:1016.1px" width="3" height="12" viewBox="0 0 3 12"><rect x="0.2" y="0.3" width="2.4" height="8.5" rx="0.6" fill="#fdb65e"/><rect x="0.3" y="10.1" width="2.2" height="1.9" rx="0.9" fill="#fdb65e"/></svg>
<div class="t" style="left:867.6px;top:1016.16px;font-size:16px;color:#595959;font-weight:400;letter-spacing:-0.42px"></div>
<svg style="position:absolute;left:849.6px;top:1047.7px" width="3" height="12" viewBox="0 0 3 12"><rect x="0.2" y="0.3" width="2.4" height="8.5" rx="0.6" fill="#fdb65e"/><rect x="0.3" y="10.1" width="2.2" height="1.9" rx="0.9" fill="#fdb65e"/></svg>
<div class="t" style="left:867.6px;top:1047.76px;font-size:16px;color:#595959;font-weight:400;letter-spacing:-0.42px"></div>
<svg style="position:absolute;left:1063.7px;top:952.7px" width="11" height="12" viewBox="0 0 11 12"><rect x="0.0" y="0" width="2.4" height="8.6" rx="0.6" fill="#e8604c"/><rect x="0.1" y="10" width="2.2" height="2" rx="0.8" fill="#e8604c"/><rect x="4.2" y="0" width="2.4" height="8.6" rx="0.6" fill="#e8604c"/><rect x="4.3" y="10" width="2.2" height="2" rx="0.8" fill="#e8604c"/><rect x="8.4" y="0" width="2.4" height="8.6" rx="0.6" fill="#e8604c"/><rect x="8.5" y="10" width="2.2" height="2" rx="0.8" fill="#e8604c"/></svg>
<div class="t" style="left:1085.2px;top:952.96px;font-size:16px;color:#595959;font-weight:400;letter-spacing:-0.42px">SSL Chain Expiry</div>
<svg style="position:absolute;left:1067.2px;top:984.5px" width="3" height="12" viewBox="0 0 3 12"><rect x="0.2" y="0.3" width="2.4" height="8.5" rx="0.6" fill="#fdb65e"/><rect x="0.3" y="10.1" width="2.2" height="1.9" rx="0.9" fill="#fdb65e"/></svg>
<div class="t" style="left:1085.2px;top:984.56px;font-size:16px;color:#595959;font-weight:400;letter-spacing:-0.42px">Insecure Cookies</div>
<svg style="position:absolute;left:1067.2px;top:1016.1px" width="3" height="12" viewBox="0 0 3 12"><rect x="0.2" y="0.3" width="2.4" height="8.5" rx="0.6" fill="#fdb65e"/><rect x="0.3" y="10.1" width="2.2" height="1.9" rx="0.9" fill="#fdb65e"/></svg>
<div class="t" style="left:1085.2px;top:1016.16px;font-size:16px;color:#595959;font-weight:400;letter-spacing:-0.42px"></div>
<svg style="position:absolute;left:1067.2px;top:1047.7px" width="3" height="12" viewBox="0 0 3 12"><rect x="0.2" y="0.3" width="2.4" height="8.5" rx="0.6" fill="#fdb65e"/><rect x="0.3" y="10.1" width="2.2" height="1.9" rx="0.9" fill="#fdb65e"/></svg>
<div class="t" style="left:1085.2px;top:1047.76px;font-size:16px;color:#595959;font-weight:400;letter-spacing:-0.42px"></div>
<svg style="position:absolute;left:1281.3px;top:952.7px" width="11" height="12" viewBox="0 0 11 12"><rect x="0.0" y="0" width="2.4" height="8.6" rx="0.6" fill="#e8604c"/><rect x="0.1" y="10" width="2.2" height="2" rx="0.8" fill="#e8604c"/><rect x="4.2" y="0" width="2.4" height="8.6" rx="0.6" fill="#e8604c"/><rect x="4.3" y="10" width="2.2" height="2" rx="0.8" fill="#e8604c"/><rect x="8.4" y="0" width="2.4" height="8.6" rx="0.6" fill="#e8604c"/><rect x="8.5" y="10" width="2.2" height="2" rx="0.8" fill="#e8604c"/></svg>
<div class="t" style="left:1302.8px;top:952.96px;font-size:16px;color:#595959;font-weight:400;letter-spacing:-0.42px">DNSSEC Validation</div>
<svg style="position:absolute;left:1284.8px;top:984.5px" width="3" height="12" viewBox="0 0 3 12"><rect x="0.2" y="0.3" width="2.4" height="8.5" rx="0.6" fill="#fdb65e"/><rect x="0.3" y="10.1" width="2.2" height="1.9" rx="0.9" fill="#fdb65e"/></svg>
<div class="t" style="left:1302.8px;top:984.56px;font-size:16px;color:#595959;font-weight:400;letter-spacing:-0.42px">Defacement</div>
<svg style="position:absolute;left:1284.8px;top:1016.1px" width="3" height="12" viewBox="0 0 3 12"><rect x="0.2" y="0.3" width="2.4" height="8.5" rx="0.6" fill="#fdb65e"/><rect x="0.3" y="10.1" width="2.2" height="1.9" rx="0.9" fill="#fdb65e"/></svg>
<div class="t" style="left:1302.8px;top:1016.16px;font-size:16px;color:#595959;font-weight:400;letter-spacing:-0.42px"></div>
<svg style="position:absolute;left:1284.8px;top:1047.7px" width="3" height="12" viewBox="0 0 3 12"><rect x="0.2" y="0.3" width="2.4" height="8.5" rx="0.6" fill="#fdb65e"/><rect x="0.3" y="10.1" width="2.2" height="1.9" rx="0.9" fill="#fdb65e"/></svg>
<div class="t" style="left:1302.8px;top:1047.76px;font-size:16px;color:#595959;font-weight:400;letter-spacing:-0.42px"></div>
<div class="t" style="right:113.5px;top:1090.36px;font-size:16px;color:#5290f0;font-weight:400;letter-spacing:-0.21px">View all Assertions</div>
<svg style="position:absolute;left:1416px;top:911.7px" width="14" height="13" viewBox="0 0 14 13"><path d="M1.6 8.6 L7.9 2.3 L10.7 5.1 L4.4 11.4 Q2.2 12.6 0.9 12.1 Q0.4 10.8 1.6 8.6 Z" fill="#555"/><path d="M8.9 1.3 L9.9 0.4 a1.3 1.3 0 0 1 1.8 0 l1 1 a1.3 1.3 0 0 1 0 1.8 L11.7 4.1 Z" fill="#555"/></svg>
<svg style="position:absolute;left:1436.5px;top:910.7px" width="12" height="15" viewBox="0 0 12 15"><path d="M4.3 2.6 a1.7 1.7 0 0 1 3.4 0 Z" fill="#555"/><rect x="0.6" y="2.5" width="10.8" height="2.2" rx="0.8" fill="#555"/><path d="M1.6 5.9 H10.4 V13.2 a1.6 1.6 0 0 1 -1.6 1.6 H3.2 a1.6 1.6 0 0 1 -1.6 -1.6 Z" fill="#555"/><rect x="4.1" y="7.4" width="1.1" height="5.2" fill="#fff"/><rect x="6.8" y="7.4" width="1.1" height="5.2" fill="#fff"/></svg>
<svg style="position:absolute;left:1457.5px;top:911.7px" width="16" height="13" viewBox="0 0 16 13"><rect x="0.3" y="0.4" width="15" height="2" rx="1" fill="#555"/><rect x="0.3" y="5.5" width="15" height="2" rx="1" fill="#555"/><rect x="0.3" y="10.5" width="15" height="2" rx="1" fill="#555"/></svg>
</div></div>
<div style="position:absolute;left:1572px;top:365px;width:15px;height:652.5px;background:#fafafa"></div>
<svg style="position:absolute;left:1574px;top:375.5px" width="14" height="9" viewBox="0 0 14 9"><path d="M0.3 8.3 L7 0.8 L13.7 8.3 Z" fill="#8f8f8f"/></svg>
<div style="position:absolute;left:1576px;top:426px;width:10px;height:338px;background:#8f8f8f;border-radius:5px"></div>
<svg style="position:absolute;left:1574px;top:997.5px" width="14" height="9" viewBox="0 0 14 9"><path d="M0.3 0.8 L7 8.3 L13.7 0.8 Z" fill="#8f8f8f"/></svg>
</body></html>
